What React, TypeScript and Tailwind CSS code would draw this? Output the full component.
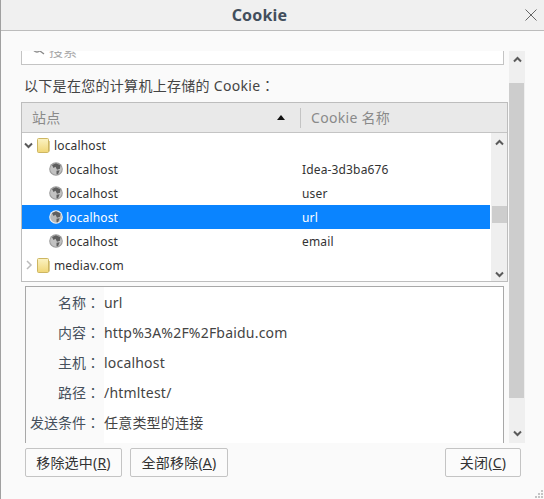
const font = { fontFamily: '"Noto Sans", "Noto Sans CJK SC", sans-serif' };
const colonFont = { fontFamily: '"Noto Sans CJK TC", sans-serif' };

const Folder = () => (
  <svg width="13" height="15" viewBox="0 0 13 15" className="shrink-0">
    <defs>
      <linearGradient id="folderFill" x1="0" y1="0" x2="0" y2="1">
        <stop offset="0" stopColor="#fbf3c4" />
        <stop offset="1" stopColor="#f0d676" />
      </linearGradient>
    </defs>
    <path d="M11 3h2v10.500h-2z" fill="#d9cc96" />
    <rect x="0.500" y="0.500" width="11" height="14" rx="1" fill="url(#folderFill)" stroke="#cdb662" />
  </svg>
);

const Globe = ({ selected }: { selected?: boolean }) => (
  <svg width="14" height="14" viewBox="0 0 14 14" className="shrink-0">
    <circle cx="7" cy="7" r="6.800" fill={selected ? "#f4f4f4" : "#9a9a9a"} />
    <circle cx="7" cy="7" r="5.800" fill={selected ? "#b8b8b8" : "#c2c2c2"} />
    <path d="M3 3 7 1.300l4.500 2-.5 3.500-3 1-1.500-3-2 1.200-1-2zM7.500 8.700l3.200-.4L9 12.300H7.500z" fill="#5e5e5e" />
  </svg>
);

const Chevron = ({ down, className }: { down?: boolean; className?: string }) => (
  <svg width="9" height="7" viewBox="0 0 9 7" className={className}>
    <path d={down ? "M1 1.500 4.500 5 8 1.500" : "M1 5.500 4.500 2 8 5.500"} fill="none" stroke="#5a5a5a" strokeWidth="2" />
  </svg>
);

const treeRows = [
  { name: "localhost", cookie: "Idea-3d3ba676" },
  { name: "localhost", cookie: "user" },
  { name: "localhost", cookie: "url", selected: true },
  { name: "localhost", cookie: "email" },
];

const details = [
  ["名称", "url"],
  ["内容", "http%3A%2F%2Fbaidu.com"],
  ["主机", "localhost"],
  ["路径", "/htmltest/"],
  ["发送条件", "任意类型的连接"],
];

const Btn = ({ w, label, k }: { w: string; label: string; k: string }) => (
  <button className={`h-[29px] ${w} rounded-[2px] border border-[#c4c4c4] bg-[#fbfbfb] text-[14px] tracking-[0.2px] text-[#333]`}>
    {label}(<span className="underline">{k}</span>)
  </button>
);

export default function App() {
  return (
    <div style={font} className="relative flex h-[499px] w-[544px] flex-col overflow-hidden border-l border-[#a0a0a0] bg-[#fafafa] text-[#333]">
      <div className="relative flex h-[31px] shrink-0 items-center justify-center border-b border-[#bcbcbc] bg-[#f0f0f0] pr-[26px]">
        <span className="text-[16px] font-bold tracking-[0.2px] text-[#424e5c]">Cookie</span>
        <svg width="12" height="12" viewBox="0 0 12 12" className="absolute left-[524px] top-[9px]">
          <path d="M.5.500l11 11M11.500.500l-11 11" stroke="#666" strokeWidth="1" fill="none" />
        </svg>
      </div>

      <div className="mt-[20px] flex h-[392px] shrink-0">
        <div className="w-[508px] shrink-0 overflow-hidden">
          <div className="ml-[20px] flex h-[14px] w-[483px] items-end gap-[4px] overflow-hidden border-x border-b border-[#c4c4c4] bg-white pl-[11px]">
            <svg width="12" height="12" viewBox="0 0 12 12" className="mb-[5px] shrink-0">
              <circle cx="4" cy="1" r="4" fill="none" stroke="#888" strokeWidth="1.300" />
              <path d="M7 4l4 3" stroke="#888" strokeWidth="1.300" />
            </svg>
            <span className="mb-[2px] h-[14px] text-[14px] leading-[6px] text-[#aaa]">搜索</span>
          </div>

          <div className="ml-[23px] mt-[10px] h-[20px] text-[14px] leading-[20px] tracking-[0.3px] text-[#444]">
            以下是在您的计算机上存储的 Cookie<span style={colonFont}>：</span>
          </div>

          <div className="ml-[20px] mt-[7px] w-[487px] border border-[#bdbdbd]">
            <div className="flex h-[30px] items-center border-b border-[#c4c4c4] bg-[#e9e9e9] text-[14px] tracking-[0.3px] text-[#8a8a8a]">
              <span className="ml-[10px] w-[245px]">站点</span>
              <svg width="8" height="5" viewBox="0 0 8 5" className="shrink-0">
                <path d="M0 5 4 0l4 5z" fill="#111" />
              </svg>
              <span className="ml-[15px] mr-[10px] h-[20px] w-px bg-[#c4c4c4]" />
              <span>Cookie 名称</span>
            </div>
            <div className="flex h-[148px] bg-white">
              <div className="w-[468px] text-[12px] tracking-[0.15px] text-[#333]">
                <div className="flex h-[24px] items-center">
                  <Chevron down className="ml-[2px] mr-[4px]" />
                  <Folder />
                  <span className="ml-[4px] pt-[2px]">localhost</span>
                </div>
                {treeRows.map((row) => (
                  <div key={row.cookie} className={`flex h-[24px] items-center ${row.selected ? "bg-[#0a84ff] text-white" : ""}`}>
                    <span className="ml-[27px]">
                      <Globe selected={row.selected} />
                    </span>
                    <span className="ml-[3px] w-[236px] pt-[2px]">{row.name}</span>
                    <span className="pt-[2px]">{row.cookie}</span>
                  </div>
                ))}
                <div className="flex h-[24px] items-center">
                  <svg width="7" height="10" viewBox="0 0 7 10" className="ml-[4px] mr-[4px]">
                    <path d="M1 1l4 4-4 4" fill="none" stroke="#bbb" strokeWidth="1.500" />
                  </svg>
                  <Folder />
                  <span className="ml-[4px] pt-[2px]">mediav.com</span>
                </div>
              </div>
              <div className="ml-px flex w-[16px] flex-col items-center bg-[#efefef] pt-[6px]">
                <Chevron />
                <div className="mt-[60px] h-[17px] w-[15px] bg-[#cdcdcd]" />
                <Chevron down className="mt-[48px]" />
              </div>
            </div>
          </div>

          <div className="ml-[24px] mt-[4px] flex h-[157px] w-[479px] border-l border-t border-r border-[#a8a8a8] bg-white">
            <div className="w-[78px] bg-[#fafafa]">
              {details.map(([label]) => (
                <div key={label} className="flex h-[30px] items-center justify-end pr-[4px] text-[14px] text-[#46505c]">
                  {label}
                  <span style={colonFont}>：</span>
                </div>
              ))}
            </div>
            <div>
              {details.map(([label, value]) => (
                <div key={label} className="flex h-[30px] items-center text-[14px] tracking-[0.2px] text-[#444]">
                  {value}
                </div>
              ))}
            </div>
          </div>
        </div>

        <div className="flex h-full w-[16px] shrink-0 flex-col items-center bg-[#efefef] pt-[5px]">
          <Chevron />
          <div className="mt-[20px] h-[315px] w-[15px] self-start bg-[#cdcdcd]" />
          <Chevron down className="mt-[32px]" />
        </div>
      </div>

      <div className="ml-[24px] mt-[5px] flex w-[496px]">
        <Btn w="w-[97px]" label="移除选中" k="R" />
        <div className="ml-[8px]">
          <Btn w="w-[98px]" label="全部移除" k="A" />
        </div>
        <div className="ml-auto">
          <Btn w="w-[76px]" label="关闭" k="C" />
        </div>
      </div>

      <svg width="8" height="8" viewBox="0 0 8 8" className="absolute bottom-[1px] right-[1px]">
        <path d="M6 0h2v2H6zM3 3h2v2H3zM6 3h2v2H6zM0 6h2v2H0zM3 6h2v2H3zM6 6h2v2H6z" fill="#c4c4c4" />
      </svg>
    </div>
  );
}
